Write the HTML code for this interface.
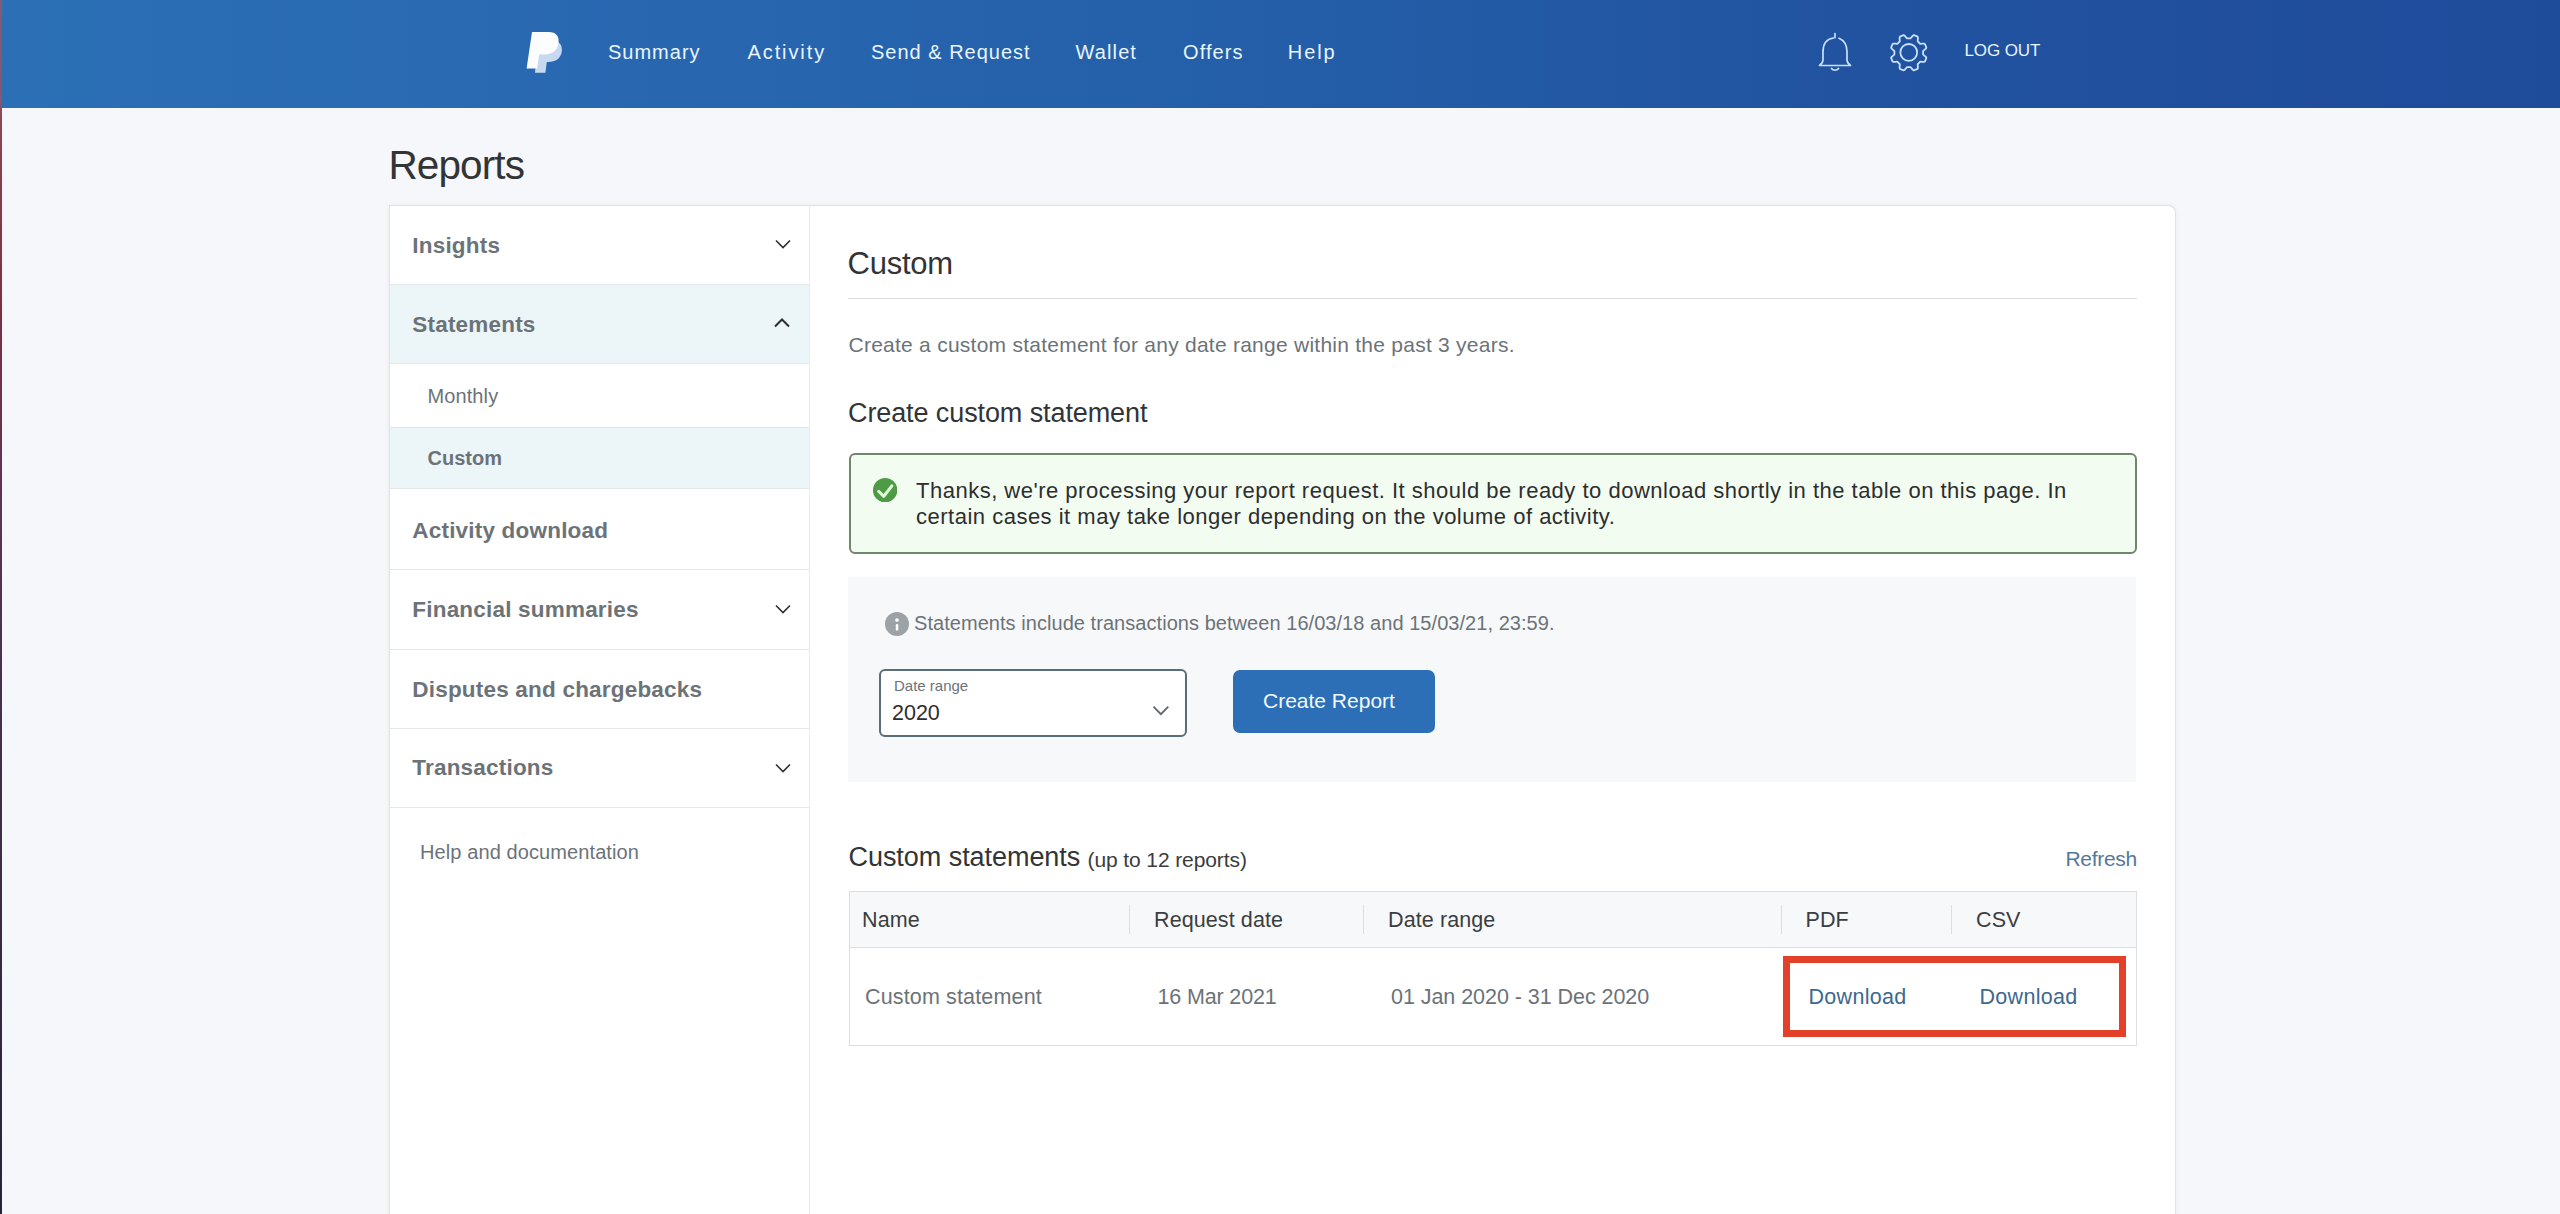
<!DOCTYPE html>
<html><head><meta charset="utf-8"><title>Reports</title>
<style>
html,body{margin:0;padding:0;}
body{width:2560px;height:1214px;overflow:hidden;position:relative;background:#f5f7fb;font-family:"Liberation Sans", sans-serif;}
.t{position:absolute;white-space:nowrap;line-height:1;font-family:"Liberation Sans", sans-serif;}
.r{position:absolute;}
</style></head><body>
<div class="r" style="left:0px;top:0px;width:2560px;height:108px;background:linear-gradient(90deg,#2b6fb5 0%,#2969b2 20%,#245ea8 50%,#2153a0 72%,#1f4b9b 100%)"></div>
<svg class="r" style="left:518px;top:26px" width="52" height="52" viewBox="0 0 52 52">
<path d="M19.5 14 L32.5 14 C40.5 14 44.8 18.5 43.8 25.5 C42.8 32.5 37.5 36 30.5 36 L28.8 36 L27.4 46.8 L17 46.8 Z" fill="#c6d9f1"/>
<path d="M14 6 L30.5 6 C38.5 6 41.5 10.5 40.5 17.5 C39.5 24.5 34 28.5 27 28.5 L21.2 28.5 L19.2 42.4 L8.6 42.4 Z" fill="#fbfdff"/>
</svg>
<div class="t" style="left:608.0px;top:42.47px;font-size:20px;color:#e9f5ff;font-weight:400;letter-spacing:1px;">Summary</div>
<div class="t" style="left:747.5px;top:42.47px;font-size:20px;color:#e9f5ff;font-weight:400;letter-spacing:1.9px;">Activity</div>
<div class="t" style="left:871.0px;top:42.47px;font-size:20px;color:#e9f5ff;font-weight:400;letter-spacing:1px;">Send &amp; Request</div>
<div class="t" style="left:1075.6px;top:42.47px;font-size:20px;color:#e9f5ff;font-weight:400;letter-spacing:1.1px;">Wallet</div>
<div class="t" style="left:1183.0px;top:42.47px;font-size:20px;color:#e9f5ff;font-weight:400;letter-spacing:1.1px;">Offers</div>
<div class="t" style="left:1287.8px;top:42.47px;font-size:20px;color:#e9f5ff;font-weight:400;letter-spacing:1.9px;">Help</div>
<svg class="r" style="left:1812px;top:28px" width="46" height="48" viewBox="0 0 46 48">
<g fill="none" stroke="#c9e0fc" stroke-width="1.7" stroke-linecap="round" stroke-linejoin="round">
<path d="M23 5.5 V9.6"/>
<path d="M21.5 10 C14 11 11 17 11 24 V32 C11 34.5 9.5 36 7.5 37.5 H38.5 C36.5 36 35 34.5 35 32 V24 C35 18 32.5 12.5 27 10.3"/>
<path d="M19.5 40.5 C21 42.8 25 42.8 26.5 40.5"/>
</g></svg>
<svg class="r" style="left:1884px;top:28px" width="50" height="50" viewBox="0 0 50 50">
<g fill="none" stroke="#c9e0fc" stroke-width="1.8" stroke-linejoin="round">
<path d="M24.8 10.3 L25.0 10.4 L25.3 10.4 L25.5 10.4 L25.8 10.4 L26.0 10.4 L26.3 10.4 L26.5 10.3 L26.8 10.1 L27.1 9.7 L27.5 9.3 L27.8 8.8 L28.2 8.4 L28.6 7.9 L29.0 7.6 L29.4 7.3 L29.8 7.2 L30.1 7.2 L30.4 7.3 L30.7 7.4 L31.0 7.6 L31.3 7.7 L31.6 7.8 L31.9 7.9 L32.2 8.0 L32.5 8.2 L32.8 8.3 L33.1 8.4 L33.3 8.6 L33.6 8.8 L33.8 9.1 L33.9 9.6 L33.9 10.1 L33.9 10.7 L33.8 11.3 L33.8 11.9 L33.7 12.4 L33.7 12.9 L33.7 13.3 L33.8 13.5 L34.0 13.7 L34.2 13.9 L34.4 14.0 L34.6 14.2 L34.8 14.4 L34.9 14.6 L35.1 14.7 L35.3 14.9 L35.5 15.1 L35.6 15.3 L35.8 15.5 L36.0 15.7 L36.2 15.8 L36.6 15.8 L37.1 15.8 L37.6 15.7 L38.2 15.7 L38.8 15.6 L39.4 15.6 L39.9 15.6 L40.4 15.7 L40.7 15.9 L40.9 16.2 L41.1 16.4 L41.2 16.7 L41.3 17.0 L41.5 17.3 L41.6 17.6 L41.7 17.9 L41.8 18.2 L41.9 18.5 L42.1 18.8 L42.2 19.1 L42.3 19.4 L42.3 19.7 L42.2 20.1 L41.9 20.5 L41.6 20.9 L41.1 21.3 L40.7 21.7 L40.2 22.0 L39.8 22.4 L39.4 22.7 L39.2 23.0 L39.1 23.2 L39.1 23.5 L39.1 23.7 L39.1 24.0 L39.1 24.2 L39.1 24.5 L39.1 24.8 L39.1 25.0 L39.1 25.3 L39.1 25.5 L39.1 25.8 L39.1 26.0 L39.1 26.3 L39.2 26.5 L39.4 26.8 L39.8 27.1 L40.2 27.5 L40.7 27.8 L41.1 28.2 L41.6 28.6 L41.9 29.0 L42.2 29.4 L42.3 29.8 L42.3 30.1 L42.2 30.4 L42.1 30.7 L41.9 31.0 L41.8 31.3 L41.7 31.6 L41.6 31.9 L41.5 32.2 L41.3 32.5 L41.2 32.8 L41.1 33.1 L40.9 33.3 L40.7 33.6 L40.4 33.8 L39.9 33.9 L39.4 33.9 L38.8 33.9 L38.2 33.8 L37.6 33.8 L37.1 33.7 L36.6 33.7 L36.2 33.7 L36.0 33.8 L35.8 34.0 L35.6 34.2 L35.5 34.4 L35.3 34.6 L35.1 34.8 L34.9 34.9 L34.8 35.1 L34.6 35.3 L34.4 35.5 L34.2 35.6 L34.0 35.8 L33.8 36.0 L33.7 36.2 L33.7 36.6 L33.7 37.1 L33.8 37.6 L33.8 38.2 L33.9 38.8 L33.9 39.4 L33.9 39.9 L33.8 40.4 L33.6 40.7 L33.3 40.9 L33.1 41.1 L32.8 41.2 L32.5 41.3 L32.2 41.5 L31.9 41.6 L31.6 41.7 L31.3 41.8 L31.0 41.9 L30.7 42.1 L30.4 42.2 L30.1 42.3 L29.8 42.3 L29.4 42.2 L29.0 41.9 L28.6 41.6 L28.2 41.1 L27.8 40.7 L27.5 40.2 L27.1 39.8 L26.8 39.4 L26.5 39.2 L26.3 39.1 L26.0 39.1 L25.8 39.1 L25.5 39.1 L25.3 39.1 L25.0 39.1 L24.8 39.1 L24.5 39.1 L24.2 39.1 L24.0 39.1 L23.7 39.1 L23.5 39.1 L23.2 39.1 L23.0 39.2 L22.7 39.4 L22.4 39.8 L22.0 40.2 L21.7 40.7 L21.3 41.1 L20.9 41.6 L20.5 41.9 L20.1 42.2 L19.7 42.3 L19.4 42.3 L19.1 42.2 L18.8 42.1 L18.5 41.9 L18.2 41.8 L17.9 41.7 L17.6 41.6 L17.3 41.5 L17.0 41.3 L16.7 41.2 L16.4 41.1 L16.2 40.9 L15.9 40.7 L15.7 40.4 L15.6 39.9 L15.6 39.4 L15.6 38.8 L15.7 38.2 L15.7 37.6 L15.8 37.1 L15.8 36.6 L15.8 36.2 L15.7 36.0 L15.5 35.8 L15.3 35.6 L15.1 35.5 L14.9 35.3 L14.7 35.1 L14.6 34.9 L14.4 34.8 L14.2 34.6 L14.0 34.4 L13.9 34.2 L13.7 34.0 L13.5 33.8 L13.3 33.7 L12.9 33.7 L12.4 33.7 L11.9 33.8 L11.3 33.8 L10.7 33.9 L10.1 33.9 L9.6 33.9 L9.1 33.8 L8.8 33.6 L8.6 33.3 L8.4 33.1 L8.3 32.8 L8.2 32.5 L8.0 32.2 L7.9 31.9 L7.8 31.6 L7.7 31.3 L7.6 31.0 L7.4 30.7 L7.3 30.4 L7.2 30.1 L7.2 29.8 L7.3 29.4 L7.6 29.0 L7.9 28.6 L8.4 28.2 L8.8 27.8 L9.3 27.5 L9.7 27.1 L10.1 26.8 L10.3 26.5 L10.4 26.3 L10.4 26.0 L10.4 25.8 L10.4 25.5 L10.4 25.3 L10.4 25.0 L10.3 24.8 L10.4 24.5 L10.4 24.2 L10.4 24.0 L10.4 23.7 L10.4 23.5 L10.4 23.2 L10.3 23.0 L10.1 22.7 L9.7 22.4 L9.3 22.0 L8.8 21.7 L8.4 21.3 L7.9 20.9 L7.6 20.5 L7.3 20.1 L7.2 19.7 L7.2 19.4 L7.3 19.1 L7.4 18.8 L7.6 18.5 L7.7 18.2 L7.8 17.9 L7.9 17.6 L8.0 17.3 L8.2 17.0 L8.3 16.7 L8.4 16.4 L8.6 16.2 L8.8 15.9 L9.1 15.7 L9.6 15.6 L10.1 15.6 L10.7 15.6 L11.3 15.7 L11.9 15.7 L12.4 15.8 L12.9 15.8 L13.3 15.8 L13.5 15.7 L13.7 15.5 L13.9 15.3 L14.0 15.1 L14.2 14.9 L14.4 14.7 L14.6 14.6 L14.7 14.4 L14.9 14.2 L15.1 14.0 L15.3 13.9 L15.5 13.7 L15.7 13.5 L15.8 13.3 L15.8 12.9 L15.8 12.4 L15.7 11.9 L15.7 11.3 L15.6 10.7 L15.6 10.1 L15.6 9.6 L15.7 9.1 L15.9 8.8 L16.2 8.6 L16.4 8.4 L16.7 8.3 L17.0 8.2 L17.3 8.0 L17.6 7.9 L17.9 7.8 L18.2 7.7 L18.5 7.6 L18.8 7.4 L19.1 7.3 L19.4 7.2 L19.7 7.2 L20.1 7.3 L20.5 7.6 L20.9 7.9 L21.3 8.4 L21.7 8.8 L22.0 9.3 L22.4 9.7 L22.7 10.1 L23.0 10.3 L23.2 10.4 L23.5 10.4 L23.7 10.4 L24.0 10.4 L24.2 10.4 L24.5 10.4 Z"/><circle cx="24.75" cy="24.4" r="8.4"/></g></svg>
<div class="t" style="left:1964.5px;top:42.01px;font-size:17px;color:#e9f5ff;font-weight:400;letter-spacing:-0.1px;">LOG OUT</div>
<div class="r" style="left:0px;top:0px;width:2px;height:1214px;background:linear-gradient(180deg,#865a72 0px,#875670 100px,#8a4650 125px,#7e2e45 310px,#5a3550 505px,#46304a 710px,#3a2c42 905px,#252536 1214px)"></div>
<div class="t" style="left:388.5px;top:145.42px;font-size:40.5px;color:#323436;font-weight:400;letter-spacing:-0.9px;">Reports</div>
<div class="r" style="left:390px;top:206px;width:1785px;height:1024px;background:#fff;border-radius:0 7px 0 0;box-shadow:0 0 0 1px #dfe1e4, 0 0 5px 1px rgba(0,0,0,0.05)"></div>
<div class="r" style="left:809px;top:206px;width:1px;height:1008px;background:#e9ecee"></div>
<div class="r" style="left:390px;top:284px;width:419px;height:79px;background:#ecf5f8"></div>
<div class="r" style="left:390px;top:427px;width:419px;height:61px;background:#ecf5f8"></div>
<div class="r" style="left:390px;top:284px;width:419px;height:1px;background:#e6e7e9"></div>
<div class="r" style="left:390px;top:363px;width:419px;height:1px;background:#e6e7e9"></div>
<div class="r" style="left:390px;top:427px;width:419px;height:1px;background:#e6e7e9"></div>
<div class="r" style="left:390px;top:488px;width:419px;height:1px;background:#e6e7e9"></div>
<div class="r" style="left:390px;top:569px;width:419px;height:1px;background:#e6e7e9"></div>
<div class="r" style="left:390px;top:649px;width:419px;height:1px;background:#e6e7e9"></div>
<div class="r" style="left:390px;top:728px;width:419px;height:1px;background:#e6e7e9"></div>
<div class="r" style="left:390px;top:807px;width:419px;height:1px;background:#e6e7e9"></div>
<div class="t" style="left:412.3px;top:234.65px;font-size:22.5px;color:#6c7378;font-weight:700;letter-spacing:0.2px;">Insights</div>
<svg class="r" style="left:772px;top:235.9px" width="22" height="16" viewBox="0 0 22 16"><path d="M4 4.5 L11 11.5 L18 4.5" fill="none" stroke="#2c2e2f" stroke-width="1.6"/></svg>
<div class="t" style="left:412.3px;top:313.65px;font-size:22.5px;color:#6c7378;font-weight:700;letter-spacing:0.2px;">Statements</div>
<svg class="r" style="left:770.5px;top:315px" width="22" height="16" viewBox="0 0 22 16"><path d="M4 11.5 L11 4.5 L18 11.5" fill="none" stroke="#2c2e2f" stroke-width="2"/></svg>
<div class="t" style="left:412.3px;top:519.95px;font-size:22.5px;color:#6c7378;font-weight:700;letter-spacing:0.2px;">Activity download</div>
<div class="t" style="left:412.3px;top:598.75px;font-size:22.5px;color:#6c7378;font-weight:700;letter-spacing:0.2px;">Financial summaries</div>
<svg class="r" style="left:772px;top:600.7px" width="22" height="16" viewBox="0 0 22 16"><path d="M4 4.5 L11 11.5 L18 4.5" fill="none" stroke="#2c2e2f" stroke-width="1.6"/></svg>
<div class="t" style="left:412.3px;top:678.55px;font-size:22.5px;color:#6c7378;font-weight:700;letter-spacing:0.2px;">Disputes and chargebacks</div>
<div class="t" style="left:412.3px;top:757.45px;font-size:22.5px;color:#6c7378;font-weight:700;letter-spacing:0.2px;">Transactions</div>
<svg class="r" style="left:772px;top:759.5px" width="22" height="16" viewBox="0 0 22 16"><path d="M4 4.5 L11 11.5 L18 4.5" fill="none" stroke="#2c2e2f" stroke-width="1.6"/></svg>
<div class="t" style="left:427.5px;top:385.67px;font-size:20px;color:#6c7378;font-weight:400;letter-spacing:0.1px;">Monthly</div>
<div class="t" style="left:427.5px;top:447.97px;font-size:20px;color:#6c7378;font-weight:700;letter-spacing:0px;">Custom</div>
<div class="t" style="left:420.0px;top:841.87px;font-size:20px;color:#6c7378;font-weight:400;letter-spacing:0.1px;">Help and documentation</div>
<div class="t" style="left:847.5px;top:248.16px;font-size:31px;color:#323436;font-weight:400;letter-spacing:-0.25px;">Custom</div>
<div class="r" style="left:848px;top:298px;width:1289px;height:1px;background:#d9dcde"></div>
<div class="t" style="left:848.5px;top:333.62px;font-size:21px;color:#6c7378;font-weight:400;letter-spacing:0.25px;">Create a custom statement for any date range within the past 3 years.</div>
<div class="t" style="left:848.0px;top:399.64px;font-size:27px;color:#323436;font-weight:400;letter-spacing:-0.1px;">Create custom statement</div>
<div class="r" style="left:849px;top:453px;width:1288px;height:101px;box-sizing:border-box;border:2px solid #70876b;border-radius:6px;background:#f3fcf0"></div>
<svg class="r" style="left:873px;top:477.5px" width="24.4" height="24.4" viewBox="0 0 24 24">
<circle cx="12" cy="12" r="12" fill="#4f9a47"/>
<path d="M5.6 13.2 L10.6 18 L18.6 7.8" fill="none" stroke="#dcffd4" stroke-width="3" stroke-linecap="round" stroke-linejoin="round"/></svg>
<div class="t" style="left:916.0px;top:479.78px;font-size:22px;color:#2c2e2f;font-weight:400;letter-spacing:0.5px;">Thanks, we're processing your report request. It should be ready to download shortly in the table on this page. In</div>
<div class="t" style="left:916.0px;top:506.48px;font-size:22px;color:#2c2e2f;font-weight:400;letter-spacing:0.5px;">certain cases it may take longer depending on the volume of activity.</div>
<div class="r" style="left:848px;top:577px;width:1288px;height:205px;background:#f7f8fa"></div>
<svg class="r" style="left:884.6px;top:611.6px" width="24" height="24" viewBox="0 0 24 24">
<circle cx="12" cy="12" r="12" fill="#9da2a6"/>
<circle cx="12" cy="8" r="1.85" fill="#fff"/><rect x="10.8" y="12" width="2.5" height="6.6" rx="1.2" fill="#fff"/></svg>
<div class="t" style="left:914.0px;top:612.57px;font-size:20px;color:#6c7378;font-weight:400;letter-spacing:0.05px;">Statements include transactions between 16/03/18 and 15/03/21, 23:59.</div>
<div class="r" style="left:879px;top:669px;width:308px;height:68px;box-sizing:border-box;border:2px solid #5a6d78;border-radius:6px;background:#fff"></div>
<div class="t" style="left:894.0px;top:677.50px;font-size:15px;color:#6c7378;font-weight:400;letter-spacing:0px;">Date range</div>
<div class="t" style="left:892.0px;top:703.40px;font-size:21.5px;color:#2c2e2f;font-weight:400;letter-spacing:0px;">2020</div>
<svg class="r" style="left:1150px;top:702px" width="22" height="16" viewBox="0 0 22 16"><path d="M3.5 4.6 L10.9 12.2 L18.3 4.6" fill="none" stroke="#5f6468" stroke-width="1.7"/></svg>
<div class="r" style="left:1233px;top:670px;width:202px;height:63px;background:#2c6fb6;border-radius:7px"></div>
<div class="t" style="left:1263.0px;top:690.22px;font-size:21px;color:#f2f9ff;font-weight:400;letter-spacing:0px;">Create Report</div>
<div class="t" style="left:848.5px;top:843.94px;font-size:27px;color:#323436;font-weight:400;letter-spacing:-0.05px;">Custom statements</div>
<div class="t" style="left:1087.5px;top:849.02px;font-size:21px;color:#3a3c3e;font-weight:400;letter-spacing:-0.1px;">(up to 12 reports)</div>
<div class="t" style="left:2065.5px;top:847.62px;font-size:21px;color:#52789a;font-weight:400;letter-spacing:-0.3px;">Refresh</div>
<div class="r" style="left:849px;top:891px;width:1288px;height:155px;box-sizing:border-box;border:1px solid #dcdfe2;background:#fff"></div>
<div class="r" style="left:850px;top:892px;width:1286px;height:55px;background:#f7f8fa"></div>
<div class="r" style="left:850px;top:947px;width:1286px;height:1px;background:#dcdfe2"></div>
<div class="r" style="left:1129px;top:905px;width:1px;height:29px;background:#dcdfe2"></div>
<div class="r" style="left:1363px;top:905px;width:1px;height:29px;background:#dcdfe2"></div>
<div class="r" style="left:1781px;top:905px;width:1px;height:29px;background:#dcdfe2"></div>
<div class="r" style="left:1951px;top:905px;width:1px;height:29px;background:#dcdfe2"></div>
<div class="t" style="left:862.0px;top:910.10px;font-size:21.5px;color:#3b3e40;font-weight:400;letter-spacing:0.1px;">Name</div>
<div class="t" style="left:1154.0px;top:910.10px;font-size:21.5px;color:#3b3e40;font-weight:400;letter-spacing:0.1px;">Request date</div>
<div class="t" style="left:1388.0px;top:910.10px;font-size:21.5px;color:#3b3e40;font-weight:400;letter-spacing:0.1px;">Date range</div>
<div class="t" style="left:1805.5px;top:910.10px;font-size:21.5px;color:#3b3e40;font-weight:400;letter-spacing:0.1px;">PDF</div>
<div class="t" style="left:1976.0px;top:910.10px;font-size:21.5px;color:#3b3e40;font-weight:400;letter-spacing:0.1px;">CSV</div>
<div class="t" style="left:865.0px;top:987.00px;font-size:21.5px;color:#6c7378;font-weight:400;letter-spacing:0.15px;">Custom statement</div>
<div class="t" style="left:1157.5px;top:987.00px;font-size:21.5px;color:#6c7378;font-weight:400;letter-spacing:-0.15px;">16 Mar 2021</div>
<div class="t" style="left:1391.0px;top:987.00px;font-size:21.5px;color:#6c7378;font-weight:400;letter-spacing:-0.05px;">01 Jan 2020 - 31 Dec 2020</div>
<div class="t" style="left:1808.5px;top:987.00px;font-size:21.5px;color:#3d6890;font-weight:400;letter-spacing:0.3px;">Download</div>
<div class="t" style="left:1979.5px;top:987.00px;font-size:21.5px;color:#3d6890;font-weight:400;letter-spacing:0.3px;">Download</div>
<div class="r" style="left:1783px;top:956px;width:343px;height:81px;box-sizing:border-box;border:7.5px solid #e3402a"></div>
</body></html>
